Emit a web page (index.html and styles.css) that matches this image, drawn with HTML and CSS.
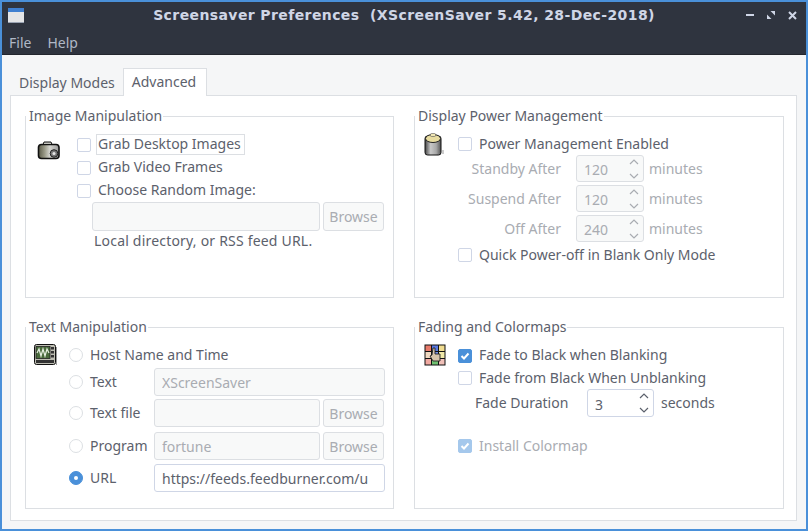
FILE: index.html
```html
<!DOCTYPE html>
<html lang="en">
<head>
<meta charset="utf-8">
<title>Screensaver Preferences</title>
<link rel="stylesheet" href="styles.css">
</head>
<body>
<div class="window">
  <header class="titlebar">
    <svg class="app-icon" width="16" height="15" viewBox="0 0 16 15"><rect width="16" height="14" y="0" fill="#e4e5e7"/><rect width="16" height="4" y="0" fill="#3f7fd0"/><rect width="16" height="1" y="14" fill="#9aa3b2"/></svg>
    <div class="title">Screensaver Preferences&nbsp; (XScreenSaver 5.42, 28-Dec-2018)</div>
    <div class="wm-buttons">
      <svg width="8" height="3" viewBox="0 0 8 3"><rect width="8" height="2" fill="#cfd6e6"/></svg>
      <svg width="8" height="8" viewBox="0 0 8 8"><path d="M0 3.5 L0 8 L4.5 8 Z M3.5 0 L8 0 L8 4.5 Z" fill="#cfd6e6"/></svg>
      <svg width="9" height="9" viewBox="0 0 9 9"><path d="M1 1 L8 8 M8 1 L1 8" stroke="#cfd6e6" stroke-width="2"/></svg>
    </div>
  </header>
  <nav class="menubar"><span>File</span><span>Help</span></nav>
  <main class="content">
    <div class="tabs">
      <div class="tab">Display Modes</div>
      <div class="tab active">Advanced</div>
    </div>
    <div class="panel">
      <fieldset class="frame">
        <legend>Image Manipulation</legend>
        <div class="frame-body">
          <svg class="icon camera" width="24" height="19" viewBox="0 0 24 19">
            <defs><linearGradient id="camBody" x1="0" x2="1" y1="0" y2="0"><stop offset="0" stop-color="#5a5a48"/><stop offset=".3" stop-color="#9a9a88"/><stop offset=".55" stop-color="#d4d4cf"/><stop offset="1" stop-color="#9a9a9a"/></linearGradient></defs>
            <rect x="1.5" y="3.5" width="20.5" height="14" rx="3" fill="url(#camBody)" stroke="#111" stroke-width="1.6"/>
            <path d="M6 3.5 L7 1 H14 L15 3.5 Z" fill="#c4c4be" stroke="#111"/>
            <circle cx="17" cy="12.5" r="3.8" fill="#777" stroke="#222"/>
            <circle cx="17" cy="12.5" r="1.5" fill="#e6e6e6"/>
          </svg>
          <div class="col">
            <div class="row row-23 check-row"><span class="check"></span><span class="focus-label">Grab Desktop Images</span></div>
            <div class="row row-23 check-row"><span class="check"></span><span class="label">Grab Video Frames</span></div>
            <div class="row row-23 check-row"><span class="check"></span><span class="label">Choose Random Image:</span></div>
            <div class="row file-row">
              <input class="field field-dir" disabled value="">
              <button class="browse" disabled>Browse</button>
            </div>
            <div class="hint">Local directory, or RSS feed URL.</div>
          </div>
        </div>
      </fieldset>

      <fieldset class="frame">
        <legend>Display Power Management</legend>
        <div class="frame-body">
          <svg class="icon battery" width="20" height="23" viewBox="0 0 20 23">
            <defs><linearGradient id="batBody" x1="0" x2="1" y1="0" y2="0"><stop offset="0" stop-color="#444"/><stop offset=".35" stop-color="#c8c8c8"/><stop offset=".7" stop-color="#a8a8a8"/><stop offset="1" stop-color="#555"/></linearGradient></defs>
            <rect x="18" y="17" width="2" height="4" fill="#ccc"/>
            <rect x="1" y="3" width="16" height="19" rx="2.5" fill="url(#batBody)" stroke="#111"/>
            <ellipse cx="9" cy="5.5" rx="7.5" ry="4" fill="#e8dca0" stroke="#222"/>
            <rect x="6.5" y="0.5" width="5" height="3" rx="1" fill="#f0e6b4" stroke="#555" stroke-width=".6"/>
          </svg>
          <div class="col">
            <div class="row power-row check-row"><span class="check"></span><span class="label">Power Management Enabled</span></div>
            <div class="row spin-row"><span class="spin-label dim">Standby After</span><div class="spin off"><span class="dim spin-value">120</span><svg class="chev" width="12" height="24" viewBox="0 0 12 24"><path d="M2 7 L6 3 L10 7 M2 17 L6 21 L10 17" fill="none" stroke="#a9acb2" stroke-width="1.2"/></svg></div><span class="dim">minutes</span></div>
            <div class="row spin-row gap-3"><span class="spin-label dim">Suspend After</span><div class="spin off"><span class="dim spin-value">120</span><svg class="chev" width="12" height="24" viewBox="0 0 12 24"><path d="M2 7 L6 3 L10 7 M2 17 L6 21 L10 17" fill="none" stroke="#a9acb2" stroke-width="1.2"/></svg></div><span class="dim">minutes</span></div>
            <div class="row spin-row gap-3"><span class="spin-label dim">Off After</span><div class="spin off"><span class="dim spin-value">240</span><svg class="chev" width="12" height="24" viewBox="0 0 12 24"><path d="M2 7 L6 3 L10 7 M2 17 L6 21 L10 17" fill="none" stroke="#a9acb2" stroke-width="1.2"/></svg></div><span class="dim">minutes</span></div>
            <div class="row quick-row check-row"><span class="check"></span><span class="label">Quick Power-off in Blank Only Mode</span></div>
          </div>
        </div>
      </fieldset>

      <fieldset class="frame">
        <legend>Text Manipulation</legend>
        <div class="frame-body text-body">
          <svg class="icon monitor" width="23" height="22" viewBox="0 0 23 22">
            <rect x="0.5" y="0.5" width="21" height="20" rx="2" fill="#bdbdb2" stroke="#111"/>
            <rect x="2" y="2.5" width="14" height="12" fill="#4a6b3c" stroke="#222" stroke-width=".8"/>
            <path d="M3 9 L5 5 L7 12 L9 5 L11 12 L13 5 L15 9" fill="none" stroke="#e6efe0" stroke-width="1.2"/>
            <rect x="17" y="3" width="3" height="2.5" fill="#333"/><rect x="17" y="7" width="3" height="2.5" fill="#333"/><rect x="17" y="11" width="3" height="2.5" fill="#333"/>
            <rect x="2" y="16" width="18" height="3" fill="#333"/>
            <rect x="22" y="3" width="1" height="18" fill="#999"/>
          </svg>
          <div class="col">
            <div class="row radio-row host"><span class="radio"></span><span class="label">Host Name and Time</span></div>
            <div class="row radio-row txt"><span class="radio"></span><span class="radio-label">Text</span><input class="field field-wide" disabled value="XScreenSaver"></div>
            <div class="row radio-row file"><span class="radio"></span><span class="radio-label">Text file</span><input class="field field-short" disabled value=""><button class="browse" disabled>Browse</button></div>
            <div class="row radio-row prog"><span class="radio"></span><span class="radio-label">Program</span><input class="field field-short" disabled value="fortune"><button class="browse" disabled>Browse</button></div>
            <div class="row radio-row url"><span class="radio on"></span><span class="radio-label">URL</span><input class="field field-wide live" value="https://feeds.feedburner.com/u"></div>
          </div>
        </div>
      </fieldset>

      <fieldset class="frame">
        <legend>Fading and Colormaps</legend>
        <div class="frame-body">
          <svg class="icon colormap" width="22" height="22" viewBox="0 0 22 22">
            <rect x="0.5" y="0.5" width="21" height="21" fill="#111"/>
            <rect x="1.5" y="1.5" width="5.5" height="5.5" fill="#e87a6a"/><rect x="8" y="1.5" width="6" height="5.5" fill="#5a78e0"/><rect x="15" y="1.5" width="5.5" height="5.5" fill="#f0dc90"/>
            <rect x="1.5" y="8" width="5.5" height="6" fill="#f0d8c0"/><rect x="8" y="8" width="6" height="6" fill="#7a90e8"/><rect x="15" y="8" width="5.5" height="6" fill="#f0e8a8"/>
            <rect x="1.5" y="15" width="5.5" height="5.5" fill="#f0a8a0"/><rect x="8" y="15" width="6" height="5.5" fill="#70c070"/><rect x="15" y="15" width="5.5" height="5.5" fill="#f0c0b8"/>
            <path d="M9 4 H11 V10 H16 V17 H9 L6 12 L8 11 Z" fill="#d8c4ac" stroke="#222" stroke-width=".9"/>
          </svg>
          <div class="col">
            <div class="row fade-row check-row"><span class="check on"><svg width="14" height="14" viewBox="0 0 14 14"><path d="M3.5 7 L6 9.5 L10.5 4.5" fill="none" stroke="#fff" stroke-width="2"/></svg></span><span class="label">Fade to Black when Blanking</span></div>
            <div class="row fade-row2 check-row"><span class="check"></span><span class="label">Fade from Black When Unblanking</span></div>
            <div class="row duration-row"><span class="duration-label">Fade Duration</span><div class="spin live"><span class="spin-value">3</span><svg class="chev" width="12" height="24" viewBox="0 0 12 24"><path d="M2 7 L6 3 L10 7 M2 17 L6 21 L10 17" fill="none" stroke="#5c616c" stroke-width="1.2"/></svg></div><span class="duration-label-end">seconds</span></div>
            <div class="row install-row check-row"><span class="check on faded"><svg width="14" height="14" viewBox="0 0 14 14"><path d="M3.5 7 L6 9.5 L10.5 4.5" fill="none" stroke="#fff" stroke-width="2"/></svg></span><span class="label dim">Install Colormap</span></div>
          </div>
        </div>
      </fieldset>
    </div>
  </main>
</div>
</body>
</html>
```

FILE: styles.css
```css
* { box-sizing: border-box; }
html, body { margin: 0; padding: 0; }
body {
  width: 808px; height: 531px; overflow: hidden;
  font-family: "Noto Sans", "Open Sans", sans-serif;
  font-size: 14px; color: #5c616c;
}
.window {
  width: 808px; height: 531px;
  border: 2px solid #4a90d9;
  background: #f5f6f7;
  display: flex; flex-direction: column;
}
.titlebar {
  height: 26px; background: #2f343f; flex: none;
  display: flex; align-items: center;
  padding: 0 9px 0 6px;
}
.app-icon { flex: none; }
.title {
  flex: 1; text-align: center;
  font-family: "DejaVu Sans", sans-serif; font-weight: bold; font-size: 14px;
  color: #cfd6e6; letter-spacing: 0.4px; white-space: nowrap;
  padding-left: 38px;
}
.wm-buttons { display: flex; align-items: center; gap: 13px; }
.menubar {
  height: 27px; flex: none; background: #2f343f; color: #afb8c6;
  border-bottom: 1px solid #23262e;
  display: flex; gap: 16px; padding: 3px 0 0 7px; align-items: center;
}
.content { flex: 1; padding: 13px 9px 8px 8px; display: flex; flex-direction: column; min-height: 0; }
.tabs { display: flex; height: 27px; flex: none; }
.tab { padding: 5px 8px 0 9px; }
.tab.active {
  background: #fff; border: 1px solid #dcdfe3; border-bottom: 0;
  margin-bottom: -1px; height: 28px; position: relative; z-index: 1;
  padding: 3px 8px 0 8px; width: 84px;
}
.panel {
  height: 426px; flex: none;
  background: #fff; border: 1px solid #dcdfe3;
  padding: 10px 13px 0 14px;
  display: grid; grid-template-columns: 369px 370px; column-gap: 20px;
  grid-template-rows: 192px 192px; row-gap: 19px;
}
.frame {
  margin: 0; min-width: 0; height: 192px;
  border: 1px solid #dcdfe3; padding: 7px 0 0 0;
}
legend { padding: 0 1px 0 3px; height: 20px; line-height: 19px; color: #5c616c; }
.frame-body { display: flex; }
.col { display: flex; flex-direction: column; flex: 1; min-width: 0; }
.icon { flex: none; }
.camera { margin: 8px 16px 0 11px; }
.battery { margin: 0 14px 0 9px; }
.monitor { margin: 0 12px 0 8px; }
.colormap { margin: 0 12px 0 9px; }
.row { display: flex; align-items: center; }
.row-23 { height: 23px; }
.check-row .check { margin-right: 7px; }
.check {
  width: 14px; height: 14px; flex: none; display: inline-block;
  border: 1px solid #cfd6e6; border-radius: 2px; background: #fff;
}
.check svg { display: block; margin: -1px; }
.check.on { background: #4a90d9; border-color: #4a90d9; }
.check.faded { background: #a5c8ec; border-color: #a5c8ec; }
.focus-label { border: 1px solid #dcdfe3; padding: 0 1px; margin-left: -2px; height: 21px; line-height: 18px; width: 149px; white-space: nowrap; }
.label, .radio-label, .duration-label, .duration-label-end { white-space: nowrap; padding-bottom: 2px; }
.file-row { height: 29px; gap: 3px; margin-left: 15px; }
.field {
  font: inherit; color: #5c616c; height: 100%;
  border: 1px solid #dcdfe3; border-radius: 3px; background: #f8f9f9;
  padding: 0 7px; outline: none; margin: 0;
}
.field:disabled { color: #a9acb2; opacity: 1; -webkit-text-fill-color: #a9acb2; }
.field.live { background: #fff; border-color: #cfd6e6; }
.field-dir { width: 228px; }
.field-short { width: 166px; }
.field-wide { width: 231px; }
.browse {
  font: inherit; color: #a9acb2; width: 61px; height: 100%; padding: 0;
  background: #f8f9f9; border: 1px solid #dcdfe3; border-radius: 3px; margin: 0;
}
.hint { height: 20px; line-height: 20px; margin-left: 17px; letter-spacing: 0.2px; }
.power-row { height: 22px; }
.spin-row { height: 27px; }
.gap-3 { margin-top: 3px; }
.quick-row { height: 22px; margin-top: 2px; }
.spin-label { width: 103px; text-align: right; margin-right: 15px; white-space: nowrap; }
.dim { color: #a9acb2; }
.spin {
  display: flex; align-items: center; justify-content: space-between;
  width: 68px; height: 100%; border: 1px solid #dcdfe3; border-radius: 3px;
  padding: 0 3px 0 7px; margin-right: 5px; background: #f8f9f9;
}
.spin-value { padding-top: 2px; }
.spin.live { background: #fff; border-color: #cfd6e6; width: 67px; height: 28px; margin-right: 7px; }
.radio {
  width: 14px; height: 14px; border-radius: 50%; flex: none;
  border: 1px solid #dcdfe3; background: #fff; margin-right: 7px;
  position: relative;
}
.radio.on { background: #4a90d9; border-color: #4a90d9; }
.radio.on::after {
  content: ""; position: absolute; left: 4px; top: 4px; width: 4px; height: 4px;
  border-radius: 50%; background: #fff;
}
.radio-label { width: 64px; flex: none; }
.radio-row .browse { margin-left: 3px; }
.host { height: 22px; }
.txt { height: 28px; margin-top: 2px; }
.file { height: 28px; margin-top: 3px; }
.prog { height: 28px; margin-top: 5px; }
.url { height: 28px; margin-top: 4px; }
.fade-row { height: 23px; }
.fade-row2 { height: 22px; }
.duration-row { height: 28px; }
.duration-label { width: 112px; margin-left: 17px; flex: none; }
.install-row { margin-top: 18px; height: 22px; }
```
